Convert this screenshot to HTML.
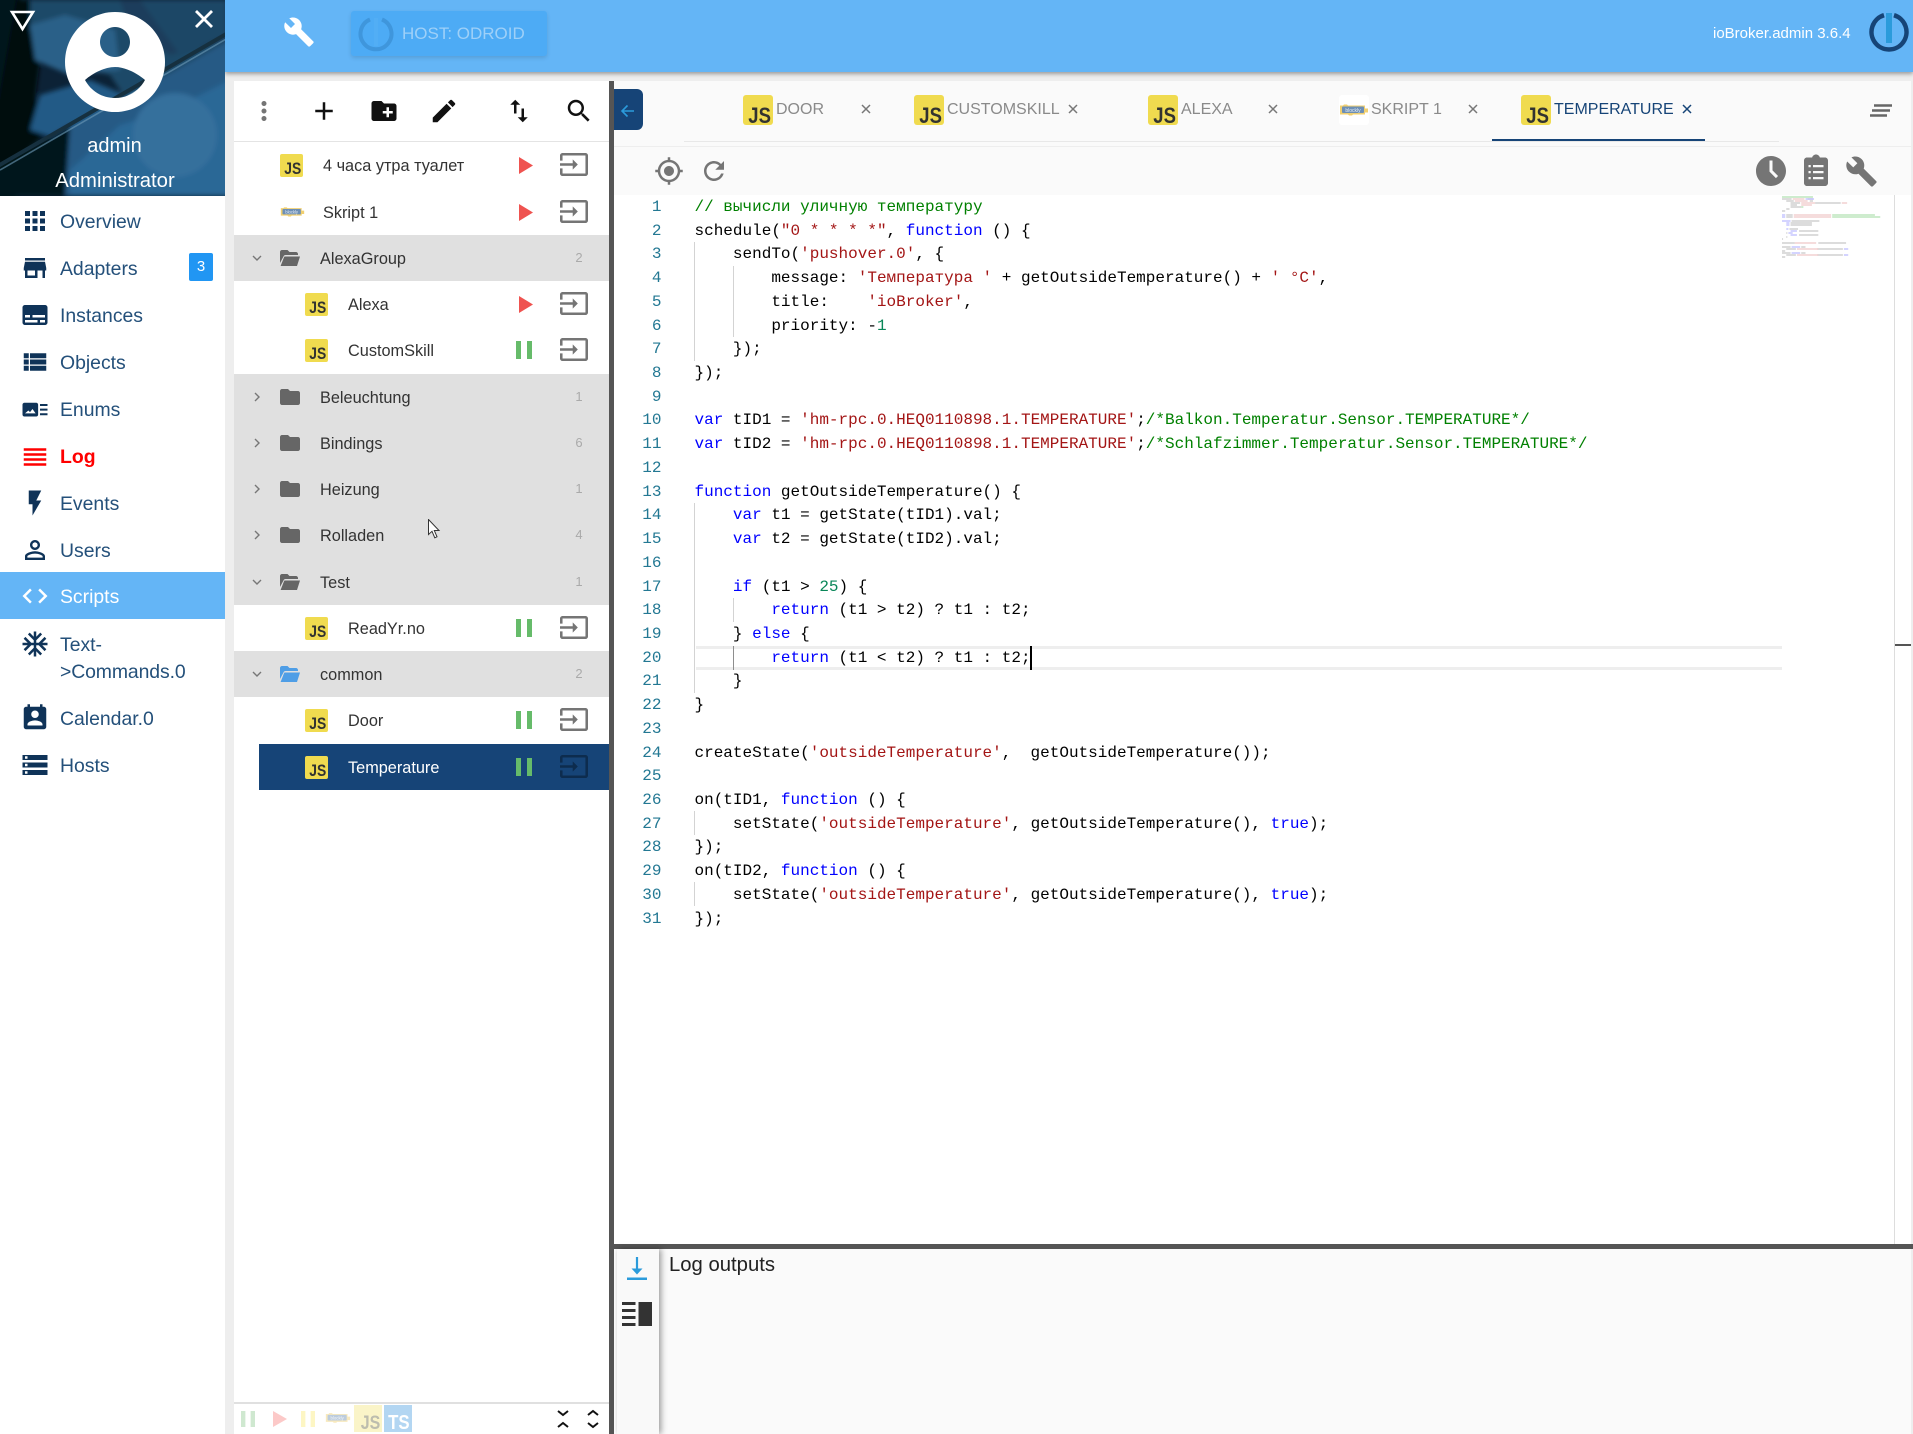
<!DOCTYPE html>
<html lang="en"><head><meta charset="utf-8"><title>ioBroker.admin</title>
<style>
html,body{margin:0;padding:0;width:1913px;height:1434px;overflow:hidden;background:#eee;font-family:"Liberation Sans","Noto Sans CJK SC",sans-serif}
.a{position:absolute}
svg{display:block}
#side{left:0;top:0;width:225px;height:1434px;background:#fff}
.it{position:absolute;left:60px;height:30px;line-height:30px;font-size:19.4px;color:#24507a;white-space:nowrap;margin-top:1px}
.ic{position:absolute;left:20px;width:30px;height:30px;fill:#0f3358}
.row{position:absolute;left:234px;width:375px;height:46px}
.row .t{position:absolute;top:1px;line-height:46px;font-size:16.3px;color:#333;white-space:nowrap}
.g{background:#e0e0e0}
.c{position:absolute;left:337px;width:16px;text-align:center;top:1px;line-height:44px;font-size:13px;color:#aaa}
.js{position:absolute;width:23px;height:23px;background:#f0db4f;border-radius:2px;overflow:hidden;font-weight:bold;color:#323330;font-size:16.5px;line-height:15px;text-align:right}
.js b{position:absolute;right:2px;bottom:0;transform:scaleX(.84);transform-origin:right bottom}
.L0{left:46px;top:12px}.L1{left:71px;top:12px}
.tj{position:absolute;top:95px;width:30px;height:30px;background:#f0db4f;border-radius:3px;overflow:hidden;font-weight:bold;color:#323330;font-size:22px;line-height:19px}
.tj b{position:absolute;right:2px;bottom:0;transform:scaleX(.84);transform-origin:right bottom}
.tt{position:absolute;top:98px;line-height:24px;font-size:16px;color:#8a8a8a;white-space:nowrap}
.x{position:absolute;top:104px;width:10px;height:10px;stroke:#777;stroke-width:1.5;fill:none}
.ex{position:absolute;left:326px;top:11px;width:28px;height:23px;fill:#757575}
.pl{position:absolute;left:285px;top:15px;width:14px;height:17px;fill:#ef5350}
.pa{position:absolute;left:282px;top:14px;width:16px;height:18px;fill:#66bb6a}
.fo{position:absolute;left:46px;top:15px;width:20px;height:16px;fill:#666}
.ch{position:absolute;left:18px;top:18px;width:10px;height:10px;fill:none;stroke:#777;stroke-width:1.4}
.tb{position:absolute;width:30px;height:30px;fill:#111}
#code{left:694.500px;top:196px;font-family:"Liberation Mono",monospace;font-size:16px;line-height:23.72px;color:#000;white-space:pre}
#nums{left:620px;top:196px;width:41.5px;text-align:right;font-family:"Liberation Mono",monospace;font-size:16px;line-height:23.72px;color:#237893;white-space:pre}
.k{color:#00f}.s{color:#a31515}.n{color:#098658}.m{color:#008000}
.gd{position:absolute;width:1px;background:#d3d3d3}
</style></head><body>
<svg width="0" height="0" style="position:absolute"><defs>
<symbol id="input" viewBox="1 3 22 18" preserveAspectRatio="none"><path d="M21 3.01H3c-1.1 0-2 .9-2 2V9h2V4.99h18v14.03H3V15H1v4.01c0 1.1.9 1.98 2 1.98h18c1.1 0 2-.88 2-1.98v-14c0-1.11-.9-2-2-2zM11 16l4-4-4-4v3H1v2h10v3z"/></symbol>
<symbol id="play" viewBox="0 0 14 17" preserveAspectRatio="none"><path d="M0 0L14 8.5 0 17z"/></symbol>
<symbol id="pause" viewBox="0 0 16 18" preserveAspectRatio="none"><path d="M0 0h5v18H0zM11 0h5v18h-5z"/></symbol>
<symbol id="folder" viewBox="2 4 20 16" preserveAspectRatio="none"><path d="M10 4H4c-1.1 0-1.99.9-1.99 2L2 18c0 1.1.9 2 2 2h16c1.1 0 2-.9 2-2V8c0-1.1-.9-2-2-2h-8l-2-2z"/></symbol>
<symbol id="fopen" viewBox="2 4 20 16" preserveAspectRatio="none"><path d="M2 17V6c0-1.1.9-2 2-2h5.5l2 2H18c1.1 0 2 .9 2 2v1H7.5c-.9 0-1.6.5-1.9 1.3L2 17z"/><path d="M7 10.5h15L19 20H2.6L6 11.3c.1-.5.5-.8 1-.8z"/></symbol>
<symbol id="chr" viewBox="0 0 10 10"><path d="M3 1l4 4-4 4"/></symbol>
<symbol id="chd" viewBox="0 0 10 10"><path d="M1 3l4 4 4-4"/></symbol>
<symbol id="build" viewBox="0 0 24 24"><path d="M22.7 19l-9.1-9.1c.9-2.3.4-5-1.5-6.9-2-2-5-2.4-7.4-1.3L9 6 6 9 1.6 4.7C.4 7.1.9 10.1 2.9 12.1c1.9 1.9 4.6 2.4 6.9 1.5l9.1 9.1c.4.4 1 .4 1.4 0l2.3-2.3c.5-.4.5-1.1.1-1.4z"/></symbol>
<symbol id="blk" viewBox="0 0 30 14"><path d="M1 3h3l1-1h3l1 1h17v3h3v4h-3v2H14l-1 1h-3l-1-1H1z" fill="#f0cf70"/><rect x="3" y="4" width="22" height="6.5" rx="1" fill="#6d8fb5"/><text x="14" y="9.3" font-size="5" text-anchor="middle" fill="#e8eef5" font-family="Liberation Sans">blockly</text></symbol>
</defs></svg>

<!-- app bar -->
<div class="a" style="left:225px;top:0;width:1688px;height:72px;background:#64b5f6;box-shadow:0 2px 4px rgba(0,0,0,.35)"></div>
<svg class="a" style="left:283px;top:16px;fill:#fff" width="32" height="32" viewBox="0 0 24 24"><use href="#build"/></svg>
<div class="a" style="left:351px;top:11px;width:196px;height:45px;background:#4dabf5;border-radius:3px;box-shadow:0 2px 4px rgba(0,0,0,.12)"></div>
<svg class="a" style="left:358px;top:15px" width="36" height="38" viewBox="0 0 36 38"><path d="M12 4.5A15.5 15.5 0 1 0 24 4.5" fill="none" stroke="#3f96dc" stroke-width="4"/><rect x="16" y="3" width="4" height="28" fill="#52aef5"/></svg>
<div class="a" style="left:402px;top:22px;font-size:17px;line-height:24px;color:#9ed0f8;white-space:nowrap">HOST: ODROID</div>
<div class="a" style="left:1713px;top:22px;font-size:15px;line-height:22px;color:#fff;white-space:nowrap;margin-top:1px">ioBroker.admin 3.6.4</div>
<svg class="a" style="left:1869px;top:12px" width="40" height="40" viewBox="0 0 40 40"><path d="M15 3.2A17.5 17.5 0 1 0 25 3.2" fill="none" stroke="#164477" stroke-width="4.5"/><rect x="17" y="1" width="6" height="30" fill="#2b9bdb"/></svg>

<!-- sidebar -->
<div class="a" id="side"></div>
<svg class="a" style="left:0;top:0" width="225" height="196" viewBox="0 0 225 196">
<defs><filter id="bl" x="-10%" y="-10%" width="120%" height="120%"><feGaussianBlur stdDeviation="2.5"/></filter><clipPath id="hc"><rect width="225" height="196"/></clipPath></defs>
<g clip-path="url(#hc)">
<rect width="225" height="196" fill="#0c2236"/>
<g filter="url(#bl)">
<path d="M-5-5H20L16 200H-5z" fill="#05121e"/>
<path d="M16 0H48L35 100 60 120 0 175-5 120z" fill="#01070e"/>
<path d="M30 0H230V60L130 105 110 75 55 60 30 30z" fill="#1f4868"/>
<path d="M30 25L65 15 115 30 120 70 70 75 35 60z" fill="#2a6088"/>
<path d="M120 0H230V40L170 55 130 30z" fill="#1a3e5c"/>
<path d="M40 95L90 80 125 95 60 140 30 130z" fill="#245a86"/>
<path d="M-5 196V170L230 40V196z" fill="#255a85"/>
<path d="M-5 196V170L70 125 65 196z" fill="#06121d"/>
<path d="M70 170L120 125 170 110 230 80V196H70z" fill="#2a6796"/>
<circle cx="175" cy="135" r="42" fill="#35709c"/>
<path d="M140 0H225V35L180 55z" fill="#1f4666"/>
</g>
<path d="M-2 166L228 33" stroke="#16303f" stroke-width="4"/>
<path d="M0 170L228 38" stroke="#6f9cb9" stroke-width="1.600" opacity=".6"/>
<path fill="#fff" fill-rule="evenodd" d="M115 12a50 50 0 1 0 .01 0zM115 27a15 15 0 1 1-.01 0zM85 80c8-7 20-13 30-13s22 6 30 13c-6 11-17 18-30 18s-24-7-30-18z"/>
<path d="M12 12H33L22.5 29z" fill="none" stroke="#fff" stroke-width="2.6"/>
<path d="M196 11L212 27M212 11L196 27" stroke="#fff" stroke-width="2.8"/>
</g></svg>
<div class="a" style="left:0;top:133px;width:229px;text-align:center;font-size:20px;line-height:26px;color:#fff">admin</div>
<div class="a" style="left:5px;top:168px;width:220px;text-align:center;font-size:20.3px;line-height:26px;color:#fff">Administrator</div>

<svg class="ic" style="top:206px" viewBox="0 0 24 24"><path d="M4 8h4V4H4v4zm6 12h4v-4h-4v4zm-6 0h4v-4H4v4zm0-6h4v-4H4v4zm6 0h4v-4h-4v4zm6-10v4h4V4h-4zm-6 4h4V4h-4v4zm6 6h4v-4h-4v4zm0 6h4v-4h-4v4z"/></svg><div class="it" style="top:206px">Overview</div>
<svg class="ic" style="top:253px" viewBox="0 0 24 24"><path d="M20 4H4v2h16V4zm1 10v-2l-1-5H4l-1 5v2h1v6h10v-6h4v6h2v-6h1zm-9 4H6v-4h6v4z"/></svg><div class="it" style="top:253px">Adapters</div>
<div class="a" style="left:189px;top:253px;width:24px;height:28px;background:#2196f3;border-radius:2px;color:#fff;font-size:15px;line-height:28px;text-align:center">3</div>
<svg class="ic" style="top:300px" viewBox="0 0 24 24"><path d="M20 4H4c-1.100 0-2 .9-2 2v12c0 1.100.9 2 2 2h16c1.100 0 2-.9 2-2V6c0-1.100-.9-2-2-2zM4 12h4v2H4v-2zm10 6H4v-2h10v2zm6 0h-4v-2h4v2zm0-4H10v-2h10v2z"/></svg><div class="it" style="top:300px">Instances</div>
<svg class="ic" style="top:347px" viewBox="0 0 24 24"><path d="M3 14h4v-4H3v4zm0 5h4v-4H3v4zM3 9h4V5H3v4zm5 5h13v-4H8v4zm0 5h13v-4H8v4zM8 5v4h13V5H8z"/></svg><div class="it" style="top:347px">Objects</div>
<svg class="ic" style="top:394px" viewBox="0 0 24 24"><path fill-rule="evenodd" d="M3.500 7h9.500c.8 0 1.500.7 1.500 1.500v8c0 .8-.7 1.500-1.500 1.500H3.500C2.700 18 2 17.300 2 16.500v-8C2 7.700 2.700 7 3.500 7zM4 15.500h8.500L10 12l-2 2.500-1.300-1.300z"/><path d="M16 8h6v1.600h-6zM16 11.700h6v1.600h-6zM16 15.400h6V17h-6z"/></svg><div class="it" style="top:394px">Enums</div>
<svg class="ic" style="top:442px;fill:#f00" viewBox="0 0 24 24"><path d="M3 15h18v-2H3v2zm0 4h18v-2H3v2zm0-8h18V9H3v2zm0-6v2h18V5H3z"/></svg><div class="it" style="top:442px;color:#f00;font-weight:bold;margin-top:0">Log</div>
<svg class="ic" style="top:488px" viewBox="0 0 24 24"><path d="M7 2v11h3v9l7-12h-4l4-8z"/></svg><div class="it" style="top:488px">Events</div>
<svg class="ic" style="top:535px" viewBox="0 0 24 24"><path d="M12 5.900c1.160 0 2.100.94 2.100 2.100s-.94 2.100-2.100 2.100S9.900 9.160 9.900 8s.94-2.100 2.100-2.100m0 9c2.970 0 6.100 1.460 6.100 2.100v1.100H5.900V17c0-.64 3.130-2.100 6.100-2.100M12 4C9.790 4 8 5.790 8 8s1.790 4 4 4 4-1.790 4-4-1.790-4-4-4zm0 9c-2.670 0-8 1.340-8 4v3h16v-3c0-2.660-5.330-4-8-4z"/></svg><div class="it" style="top:535px">Users</div>
<div class="a" style="left:0;top:572px;width:225px;height:47px;background:#64b5f6"></div>
<svg class="ic" style="top:581px;fill:#fff" viewBox="0 0 24 24"><path d="M9.400 16.600L4.800 12l4.600-4.600L8 6l-6 6 6 6 1.400-1.400zm5.200 0l4.600-4.600-4.600-4.600L16 6l6 6-6 6-1.400-1.400z"/></svg><div class="it" style="top:581px;color:#fff">Scripts</div>
<svg class="ic" style="top:629px" viewBox="0 0 24 24"><path d="M22 11h-4.170l3.240-3.240-1.410-1.420L15 11h-2V9l4.660-4.660-1.420-1.410L13 6.170V2h-2v4.170L7.760 2.930 6.340 4.340 11 9v2H9L4.340 6.340 2.930 7.760 6.170 11H2v2h4.170l-3.240 3.240 1.410 1.420L9 13h2v2l-4.660 4.660 1.420 1.410L11 17.830V22h2v-4.170l3.240 3.240 1.420-1.410L13 15v-2h2l4.660 4.660 1.410-1.420L17.830 13H22z"/></svg><div class="it" style="top:629px">Text-</div><div class="it" style="top:656px;letter-spacing:-.1px">&gt;Commands.0</div>
<svg class="ic" style="top:703px" viewBox="0 0 24 24"><path d="M19 3h-1V1h-2v2H8V1H6v2H5c-1.110 0-2 .9-2 2v14c0 1.100.89 2 2 2h14c1.100 0 2-.9 2-2V5c0-1.100-.9-2-2-2zm-7 3c1.660 0 3 1.340 3 3s-1.340 3-3 3-3-1.340-3-3 1.340-3 3-3zm6 12H6v-1c0-2 4-3.100 6-3.100s6 1.100 6 3.100v1z"/></svg><div class="it" style="top:703px">Calendar.0</div>
<svg class="ic" style="top:750px" viewBox="0 0 24 24"><path d="M2 20h20v-4H2v4zm2-3h2v2H4v-2zM2 4v4h20V4H2zm4 3H4V5h2v2zm-4 7h20v-4H2v4zm2-3h2v2H4v-2z"/></svg><div class="it" style="top:750px">Hosts</div>

<!-- left panel -->
<div class="a" style="left:234px;top:81px;width:375px;height:1353px;background:#fff"></div>
<div class="a" style="left:234px;top:141px;width:375px;height:1px;background:#e4e4e4"></div>
<svg class="tb" style="left:249px;top:96px;fill:#757575" viewBox="0 0 24 24"><path d="M12 8c1.100 0 2-.9 2-2s-.9-2-2-2-2 .9-2 2 .9 2 2 2zm0 2c-1.100 0-2 .9-2 2s.9 2 2 2 2-.9 2-2-.9-2-2-2zm0 6c-1.100 0-2 .9-2 2s.9 2 2 2 2-.9 2-2-.9-2-2-2z"/></svg>
<svg class="tb" style="left:309px;top:96px" viewBox="0 0 24 24"><path d="M19 13h-6v6h-2v-6H5v-2h6V5h2v6h6v2z"/></svg>
<svg class="tb" style="left:369px;top:96px" viewBox="0 0 24 24"><path d="M20 6h-8l-2-2H4c-1.110 0-1.990.89-1.990 2L2 18c0 1.110.89 2 2 2h16c1.110 0 2-.89 2-2V8c0-1.110-.89-2-2-2zm-1 8h-3v3h-2v-3h-3v-2h3V9h2v3h3v2z"/></svg>
<svg class="tb" style="left:429px;top:96px" viewBox="0 0 24 24"><path d="M3 17.250V21h3.750L17.810 9.940l-3.750-3.750L3 17.250zM20.710 7.040c.39-.39.39-1.020 0-1.410l-2.340-2.340c-.39-.39-1.020-.39-1.410 0l-1.830 1.830 3.750 3.750 1.830-1.830z"/></svg>
<svg class="tb" style="left:504px;top:96px" viewBox="0 0 24 24"><path d="M16 17.010V10h-2v7.010h-3L15 21l4-3.990h-3zM9 3L5 6.990h3V14h2V6.990h3L9 3z"/></svg>
<svg class="tb" style="left:564px;top:96px" viewBox="0 0 24 24"><path d="M15.500 14h-.79l-.28-.27C15.410 12.590 16 11.110 16 9.500 16 5.910 13.090 3 9.500 3S3 5.910 3 9.500 5.910 16 9.500 16c1.610 0 3.090-.59 4.230-1.570l.27.28v.79l5 4.990L20.490 19l-4.990-5zm-6 0C7.010 14 5 11.990 5 9.500S7.010 5 9.500 5 14 7.010 14 9.500 11.990 14 9.500 14z"/></svg>

<div class="row" style="top:142px"><div class="js L0"><b>JS</b></div><div class="t" style="left:89px">4 часа утра туалет</div><svg class="pl"><use href="#play"/></svg><svg class="ex"><use href="#input"/></svg></div>
<div class="row" style="top:189px"><svg class="a" style="left:46px;top:16px" width="25" height="13"><use href="#blk"/></svg><div class="t" style="left:89px">Skript 1</div><svg class="pl"><use href="#play"/></svg><svg class="ex"><use href="#input"/></svg></div>
<div class="row g" style="top:235px"><svg class="ch"><use href="#chd"/></svg><svg class="fo"><use href="#fopen"/></svg><div class="t" style="left:86px">AlexaGroup</div><div class="c">2</div></div>
<div class="row" style="top:281px"><div class="js L1"><b>JS</b></div><div class="t" style="left:114px">Alexa</div><svg class="pl"><use href="#play"/></svg><svg class="ex"><use href="#input"/></svg></div>
<div class="row" style="top:327px"><div class="js L1"><b>JS</b></div><div class="t" style="left:114px">CustomSkill</div><svg class="pa"><use href="#pause"/></svg><svg class="ex"><use href="#input"/></svg></div>
<div class="row g" style="top:374px"><svg class="ch"><use href="#chr"/></svg><svg class="fo"><use href="#folder"/></svg><div class="t" style="left:86px">Beleuchtung</div><div class="c">1</div></div>
<div class="row g" style="top:420px"><svg class="ch"><use href="#chr"/></svg><svg class="fo"><use href="#folder"/></svg><div class="t" style="left:86px">Bindings</div><div class="c">6</div></div>
<div class="row g" style="top:466px"><svg class="ch"><use href="#chr"/></svg><svg class="fo"><use href="#folder"/></svg><div class="t" style="left:86px">Heizung</div><div class="c">1</div></div>
<div class="row g" style="top:512px;height:47px"><svg class="ch"><use href="#chr"/></svg><svg class="fo"><use href="#folder"/></svg><div class="t" style="left:86px">Rolladen</div><div class="c">4</div></div>
<div class="row g" style="top:559px"><svg class="ch"><use href="#chd"/></svg><svg class="fo"><use href="#fopen"/></svg><div class="t" style="left:86px">Test</div><div class="c">1</div></div>
<div class="row" style="top:605px"><div class="js L1"><b>JS</b></div><div class="t" style="left:114px">ReadYr.no</div><svg class="pa"><use href="#pause"/></svg><svg class="ex"><use href="#input"/></svg></div>
<div class="row g" style="top:651px"><svg class="ch"><use href="#chd"/></svg><svg class="fo" style="fill:#4f9ee6"><use href="#fopen"/></svg><div class="t" style="left:86px">common</div><div class="c">2</div></div>
<div class="row" style="top:697px"><div class="js L1"><b>JS</b></div><div class="t" style="left:114px">Door</div><svg class="pa"><use href="#pause"/></svg><svg class="ex"><use href="#input"/></svg></div>
<div class="row" style="top:744px"><div class="a" style="left:25px;top:0;width:350px;height:46px;background:#164477"></div><div class="js L1"><b>JS</b></div><div class="t" style="left:114px;color:#fff">Temperature</div><svg class="pa"><use href="#pause"/></svg><svg class="ex" style="fill:#0d2c4e"><use href="#input"/></svg></div>
<svg class="a" style="left:428px;top:519px" width="14" height="20" viewBox="0 0 14 20"><path d="M.5.500V15.500L4 12.300 6.800 18.800 9 17.800 6.300 11.500H11z" fill="#fff" stroke="#333" stroke-width="1"/></svg>

<!-- bottom strip -->
<div class="a" style="left:234px;top:1402px;width:375px;height:2px;background:#e0e0e0"></div>
<svg class="a" style="left:241px;top:1411px;fill:#cfe8d0" width="14" height="16"><use href="#pause"/></svg>
<svg class="a" style="left:273px;top:1411px;fill:#fcc9c8" width="14" height="16"><use href="#play"/></svg>
<svg class="a" style="left:301px;top:1411px;fill:#fdf6c4" width="14" height="16"><use href="#pause"/></svg>
<svg class="a" style="left:325px;top:1411px;opacity:.45" width="26" height="13"><use href="#blk"/></svg>
<div class="a" style="left:354px;top:1405px;width:28px;height:27px;background:#faf4c8;color:#bdbdae;font-weight:bold;font-size:19px;line-height:17px;text-align:right"><b class="a" style="right:2px;bottom:0;transform:scaleX(.84);transform-origin:right bottom">JS</b></div>
<div class="a" style="left:384px;top:1405px;width:28px;height:27px;background:#b3d6f2;color:#fff;font-weight:bold;font-size:20px;line-height:17px;text-align:right"><b class="a" style="right:2px;bottom:0;transform:scaleX(.84);transform-origin:right bottom">TS</b></div>
<svg class="a" style="left:556px;top:1409px;fill:none;stroke:#111;stroke-width:2" width="14" height="20"><path d="M2 2l5 4 5-4M2 18l5-4 5 4"/></svg>
<svg class="a" style="left:586px;top:1409px;fill:none;stroke:#111;stroke-width:2" width="14" height="20"><path d="M2 6l5-4 5 4M2 14l5 4 5-4"/></svg>

<!-- right panel dividers -->
<div class="a" style="left:609px;top:81px;width:5px;height:1353px;background:#555"></div>
<div class="a" style="left:614px;top:81px;width:1297px;height:66px;background:#fafafa"></div>
<div class="a" style="left:684px;top:141px;width:1095px;height:1px;background:#e8e8e8"></div>
<div class="a" style="left:614px;top:146px;width:1297px;height:1px;background:#eee"></div>
<div class="a" style="left:614px;top:147px;width:1297px;height:48px;background:#fafafa"></div>
<div class="a" style="left:614px;top:195px;width:1297px;height:1049px;background:#fff"></div>
<div class="a" style="left:614px;top:89px;width:29px;height:41px;background:#164477;border-radius:0 6px 6px 0"></div>
<svg class="a" style="left:619px;top:102px" width="18" height="18" viewBox="0 0 18 18"><path d="M15 9H3M8.500 3.500L3 9l5.500 5.500" fill="none" stroke="#2b9bdb" stroke-width="1.600"/></svg>

<!-- tabs -->
<div class="tj" style="left:743px"><b>JS</b></div><div class="tt" style="left:776px">DOOR</div>
<svg class="x" style="left:861px" viewBox="0 0 10 10"><path d="M1 1l8 8M9 1l-8 8"/></svg>
<div class="tj" style="left:914px"><b>JS</b></div><div class="tt" style="left:947px">CUSTOMSKILL</div>
<svg class="x" style="left:1068px" viewBox="0 0 10 10"><path d="M1 1l8 8M9 1l-8 8"/></svg>
<div class="tj" style="left:1148px"><b>JS</b></div><div class="tt" style="left:1181px">ALEXA</div>
<svg class="x" style="left:1268px" viewBox="0 0 10 10"><path d="M1 1l8 8M9 1l-8 8"/></svg>
<div class="a" style="left:1339px;top:95px;width:30px;height:30px;background:#fff;border-radius:3px"></div>
<svg class="a" style="left:1339px;top:102px" width="30" height="15"><use href="#blk"/></svg>
<div class="tt" style="left:1371px">SKRIPT 1</div>
<svg class="x" style="left:1468px" viewBox="0 0 10 10"><path d="M1 1l8 8M9 1l-8 8"/></svg>
<div class="tj" style="left:1521px"><b>JS</b></div><div class="tt" style="left:1554px;color:#164477">TEMPERATURE</div>
<svg class="x" style="left:1682px;stroke:#164477" viewBox="0 0 10 10"><path d="M1 1l8 8M9 1l-8 8"/></svg>
<div class="a" style="left:1492px;top:139px;width:213px;height:2px;background:#164477"></div>
<svg class="a" style="left:1869px;top:103px" width="24" height="15" viewBox="0 0 24 15"><path d="M5 2.500H23M3 7.500H21M1 12.500H18" stroke="#666" stroke-width="2.600" fill="none"/></svg>

<!-- editor toolbar -->
<svg class="a" style="left:654px;top:156px;fill:#757575" width="30" height="30" viewBox="0 0 24 24"><path d="M12 8c-2.210 0-4 1.790-4 4s1.790 4 4 4 4-1.790 4-4-1.790-4-4-4zm8.940 3c-.46-4.170-3.770-7.480-7.940-7.940V1h-2v2.060C6.830 3.520 3.520 6.830 3.060 11H1v2h2.060c.46 4.170 3.770 7.480 7.940 7.940V23h2v-2.060c4.170-.46 7.480-3.770 7.940-7.940H23v-2h-2.060zM12 19c-3.870 0-7-3.130-7-7s3.130-7 7-7 7 3.130 7 7-3.130 7-7 7z"/></svg>
<svg class="a" style="left:699px;top:156px;fill:#757575" width="30" height="30" viewBox="0 0 24 24"><path d="M17.650 6.350C16.200 4.900 14.210 4 12 4c-4.420 0-7.990 3.580-7.990 8s3.570 8 7.990 8c3.730 0 6.840-2.550 7.730-6h-2.080c-.82 2.330-3.040 4-5.650 4-3.310 0-6-2.690-6-6s2.690-6 6-6c1.660 0 3.140.69 4.220 1.780L13 11h7V4l-2.350 2.350z"/></svg>
<svg class="a" style="left:1753px;top:153px;fill:#757575" width="36" height="36" viewBox="0 0 24 24"><path d="M11.990 2C6.470 2 2 6.480 2 12s4.470 10 9.990 10C17.520 22 22 17.520 22 12S17.520 2 11.990 2zm3.300 14.710L11 12.410V5h2v6.590l3.710 3.710-1.420 1.410z"/></svg>
<svg class="a" style="left:1798px;top:153px" width="36" height="36" viewBox="0 0 24 24"><path fill="#757575" d="M18 3h-3.400C14.200 1.840 13.300 1 12 1s-2.200.84-2.600 2H6c-1.100 0-2 .9-2 2v15c0 1.100.9 2 2 2h12c1.100 0 2-.9 2-2V5c0-1.100-.9-2-2-2z"/><path fill="#fafafa" d="M7 8h1.500v1.500H7zM10 8h7v1.500h-7zM7 12h1.500v1.500H7zM10 12h7v1.500h-7zM7 16h1.500v1.500H7zM10 16h7v1.500h-7z"/></svg>
<svg class="a" style="left:1845px;top:155px;fill:#757575" width="33" height="33" viewBox="0 0 24 24"><use href="#build"/></svg>

<!-- code -->
<div class="a" style="left:696px;top:646px;width:1086px;height:18px;border-top:3px solid #eee;border-bottom:3px solid #eee"></div>
<i class="gd" style="left:694px;top:242px;height:119px"></i>
<i class="gd" style="left:733px;top:266px;height:71px"></i>
<i class="gd" style="left:694px;top:503px;height:190px"></i>
<i class="gd" style="left:733px;top:598px;height:24px"></i>
<i class="gd" style="left:733px;top:646px;height:24px;background:#8e8e8e"></i>
<i class="gd" style="left:694px;top:811px;height:24px"></i>
<i class="gd" style="left:694px;top:882px;height:24px"></i>
<div class="a" style="left:1030px;top:646px;width:2px;height:24px;background:#000"></div>
<div class="a" id="nums">1
2
3
4
5
6
7
8
9
10
11
12
13
14
15
16
17
18
19
20
21
22
23
24
25
26
27
28
29
30
31</div>
<div class="a" id="code"><span class="m">// вычисли уличную температуру</span>
schedule(<span class="s">"0 * * * *"</span>, <span class="k">function</span> () {
    sendTo(<span class="s">'pushover.0'</span>, {
        message: <span class="s">'Температура '</span> + getOutsideTemperature() + <span class="s">' °C'</span>,
        title:    <span class="s">'ioBroker'</span>,
        priority: -<span class="n">1</span>
    });
});

<span class="k">var</span> tID1 = <span class="s">'hm-rpc.0.HEQ0110898.1.TEMPERATURE'</span>;<span class="m">/*Balkon.Temperatur.Sensor.TEMPERATURE*/</span>
<span class="k">var</span> tID2 = <span class="s">'hm-rpc.0.HEQ0110898.1.TEMPERATURE'</span>;<span class="m">/*Schlafzimmer.Temperatur.Sensor.TEMPERATURE*/</span>

<span class="k">function</span> getOutsideTemperature() {
    <span class="k">var</span> t1 = getState(tID1).val;
    <span class="k">var</span> t2 = getState(tID2).val;

    <span class="k">if</span> (t1 &gt; <span class="n">25</span>) {
        <span class="k">return</span> (t1 &gt; t2) ? t1 : t2;
    } <span class="k">else</span> {
        <span class="k">return</span> (t1 &lt; t2) ? t1 : t2;
    }
}

createState(<span class="s">'outsideTemperature'</span>,  getOutsideTemperature());

on(tID1, <span class="k">function</span> () {
    setState(<span class="s">'outsideTemperature'</span>, getOutsideTemperature(), <span class="k">true</span>);
});
on(tID2, <span class="k">function</span> () {
    setState(<span class="s">'outsideTemperature'</span>, getOutsideTemperature(), <span class="k">true</span>);
});</div>

<!-- minimap -->
<svg class="a" style="left:1782px;top:196px" width="110" height="64" viewBox="0 0 103 32" preserveAspectRatio="none" fill="none" stroke-width=".35" opacity=".5">
<path stroke="#444" d="M0 1.500h9M24 1.500h5M4 2.500h7M26 2.500h3M8 3.500h9M31 3.500h24M8 4.500h6M8 5.500h10M4 6.500h3M0 7.500h3M4 9.500h6M4 10.500h6M9 12.500h26M8 13.500h20M8 14.500h20M7 16.500h8M16 17.500h18M4 18.500h1M16 19.500h18M4 20.500h1M0 21.500h1M0 23.500h12M34 23.500h26M0 25.500h8M18 25.500h4M4 26.500h9M33 26.500h24M0 27.500h3M0 28.500h8M18 28.500h4M4 29.500h9M33 29.500h24M0 30.500h3"/>
<path stroke="#c44" d="M10 1.500h11M12 2.500h12M18 3.500h13M56 3.500h5M18 4.500h10M11 9.500h35M11 10.500h35M12 23.500h20M14 26.500h20M14 29.500h20"/>
<path stroke="#22f" d="M22 1.500h8M0 9.500h3M0 10.500h3M0 12.500h8M4 13.500h3M4 14.500h3M4 16.500h2M8 17.500h6M6 18.500h4M8 19.500h6M9 25.500h8M9 28.500h8M58 26.500h4M58 29.500h4"/>
<path stroke="#090" d="M0 .5h29M47 9.500h40M47 10.500h45M18 5.500h2"/>
</svg>
<div class="a" style="left:1894px;top:195px;width:1px;height:1049px;background:#ddd"></div>
<div class="a" style="left:1895px;top:644px;width:16px;height:2px;background:#555"></div>

<!-- log -->
<div class="a" style="left:614px;top:1244px;width:1299px;height:5px;background:#555"></div>
<div class="a" style="left:614px;top:1249px;width:1297px;height:185px;background:#fafafa"></div>
<div class="a" style="left:614px;top:1249px;width:3px;height:185px;background:#fff"></div>
<div class="a" style="left:617px;top:1249px;width:42px;height:185px;background:#f9f9f9;box-shadow:2px 0 6px rgba(0,0,0,.4)"></div>
<svg class="a" style="left:627px;top:1256px" width="20" height="25" viewBox="0 0 20 25"><path d="M10 1v15" stroke="#2b9bdb" stroke-width="2.200"/><path d="M4.500 12.500h11L10 18.500z" fill="#2b9bdb"/><rect y="21.500" width="20" height="2.500" fill="#2b9bdb"/></svg>
<svg class="a" style="left:622px;top:1302px" width="30" height="24" viewBox="0 0 30 24"><path d="M0 0h13.500v3H0zM0 7h13.500v3H0zM0 14h13.500v3H0zM0 21h13.500v3H0zM16.500 0H30v24H16.500z" fill="#333"/></svg>
<div class="a" style="left:669px;top:1252px;font-size:20.3px;line-height:26px;color:#222">Log outputs</div>
</body></html>
